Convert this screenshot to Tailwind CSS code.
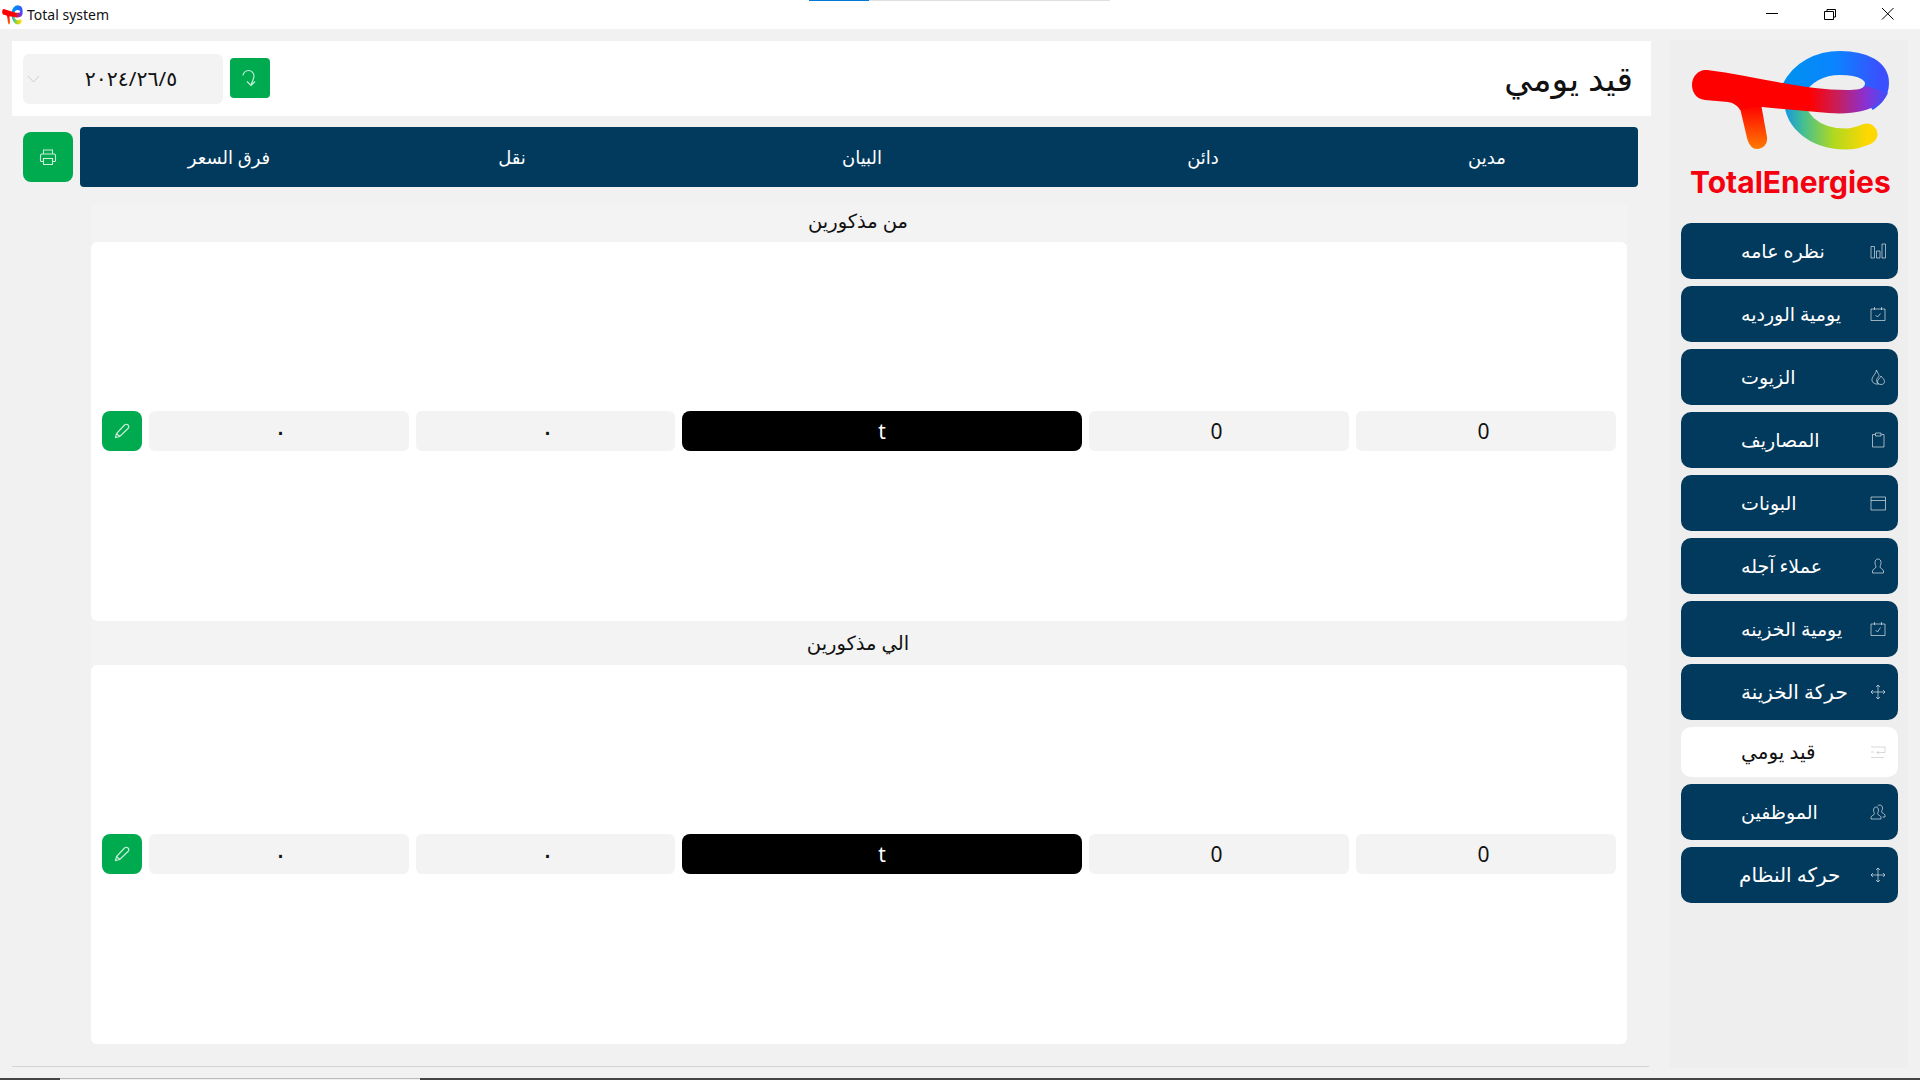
<!DOCTYPE html>
<html lang="ar">
<head>
<meta charset="UTF-8" />
<title>Total system</title>
<script src="https://cdn.jsdelivr.net/npm/@tailwindcss/browser@4"></script>
</head>
<body class="bg-[#f1f1f1] text-[#111] [font-family:'Noto_Sans','DejaVu_Sans',sans-serif] overflow-hidden">

<svg width="0" height="0" class="absolute">
  <defs>
    <linearGradient id="eLow" gradientUnits="userSpaceOnUse" x1="92" y1="0" x2="178" y2="0">
      <stop offset="0" stop-color="#0a8ff0" />
      <stop offset="0.25" stop-color="#45c090" />
      <stop offset="0.6" stop-color="#b0d820" />
      <stop offset="1" stop-color="#ffd800" />
    </linearGradient>
    <linearGradient id="eTop" gradientUnits="userSpaceOnUse" x1="100" y1="0" x2="190" y2="0">
      <stop offset="0" stop-color="#0090f0" />
      <stop offset="0.5" stop-color="#0a84ff" />
      <stop offset="1" stop-color="#3a50ff" />
    </linearGradient>
    <linearGradient id="band" gradientUnits="userSpaceOnUse" x1="0" y1="0" x2="199" y2="0">
      <stop offset="0.6" stop-color="#ff0000" />
      <stop offset="0.74" stop-color="#c81e5a" />
      <stop offset="0.88" stop-color="#8a30d0" />
      <stop offset="1" stop-color="#3a50ff" />
    </linearGradient>
    <linearGradient id="leg" gradientUnits="userSpaceOnUse" x1="0" y1="55" x2="0" y2="99">
      <stop offset="0" stop-color="#ff0000" />
      <stop offset="1" stop-color="#ff7a00" />
    </linearGradient>
    <symbol id="te" viewBox="0 0 202 102" preserveAspectRatio="none">
      <path d="M105 42C101 70 124 89 156 89C163 89 170 87 177 84" fill="none" stroke="url(#eLow)" stroke-width="21" stroke-linecap="round" />
      <path d="M103 40C112 22 130 13 150 13C175 13 187 22 187 33C187 42 182 46 176 50" fill="none" stroke="url(#eTop)" stroke-width="24" />
      <path d="M50 58L57 88C59 96 63 99 67 99C73 99 78 94 77 87L71 54Z" fill="url(#leg)" />
      <path d="M17 20C42 23 68 29 93 33C115 37 135 40 157 40C166 40 173 39 176 36L198 43C194 52 184 58 172 61C160 64 145 64 127 62L72 57C60 56 55 60 50 60C48 56 44 53 38 52L15 50C6 49 2 42 2 35C2 26 9 19 17 20Z" fill="url(#band)" />
    </symbol>
  </defs>
</svg>

<!-- title bar -->
<header class="relative h-[29px] bg-white flex items-center">
  <svg class="ml-[2px] w-[21px] h-[20px]"><use href="#te" /></svg>
  <span class="ml-[4px] text-[14px] leading-none">Total system</span>
  <div class="absolute top-0 left-[809px] flex h-px">
    <div class="w-[60px] bg-[#0078d7]"></div>
    <div class="w-[241px] bg-[#e0e0e0]"></div>
  </div>
  <div class="ml-auto mr-[3px] flex items-center text-black">
    <svg class="w-[58px] h-[29px]" viewBox="0 0 58 29" fill="none" stroke="currentColor"><path d="M23 13.5H35" /></svg>
    <svg class="w-[58px] h-[29px]" viewBox="0 0 58 29" fill="none" stroke="currentColor"><path d="M23.5 11.5H32.5V19.5H23.5ZM26 11V9.5H34.5V17H32.5" /></svg>
    <svg class="w-[58px] h-[29px]" viewBox="0 0 58 29" fill="none" stroke="currentColor"><path d="M23 8L34.5 19.5M34.5 8L23 19.5" /></svg>
  </div>
</header>

<div class="flex h-[1049px]">
  <!-- main column -->
  <main class="w-[1670px] pt-[12px]">
    <section class="ml-[12px] w-[1639px] h-[75px] bg-white flex items-center">
      <div class="ml-[11px] w-[200px] h-[50px] bg-[#f3f3f3] rounded-md flex items-center relative">
        <svg class="absolute left-[4px] w-[13px] h-[8px] text-[#cfcfcf]" viewBox="0 0 13 8" fill="none" stroke="currentColor"><path d="M1 1L6.5 7L12 1" /></svg>
        <span class="w-full text-center pl-[16px] text-[20.5px]" dir="ltr">٢٠٢٤/٢٦/٥</span>
      </div>
      <button class="ml-[7px] mb-px w-10 h-10 bg-[#00ab50] rounded flex items-center justify-center">
        <svg class="w-5 h-5 text-white/80" viewBox="0 0 20 20" fill="none" stroke="currentColor" stroke-width="1.1"><path d="M3 7.5C3 5 5.5 2.5 8.5 2.5C11.5 2.5 14 5 14 8C14 11 12 13 11 17.5M7 13.5L11 17.5L15 13.5" /></svg>
      </button>
      <h1 class="ml-auto mr-[18px] text-[34.5px] leading-none" dir="rtl">قيد يومي</h1>
    </section>

    <div class="mt-[11px] ml-[23px] flex items-center gap-[7px]">
      <button class="w-[50px] h-[50px] bg-[#00ab50] rounded-lg flex items-center justify-center">
        <svg class="w-[18px] h-[18px] text-white/80" viewBox="0 0 18 18" fill="none" stroke="currentColor" stroke-width="1.1"><path d="M4.5 6V2H13.5V6M4.5 13.5H2.5C1.7 13.5 1.5 13 1.5 12.5V7.5C1.5 6.5 2.2 6 3 6H15C15.8 6 16.5 6.5 16.5 7.5V12.5C16.5 13 16.3 13.5 15.5 13.5H13.5M4.5 10.5H13.5V16.5H4.5Z" /></svg>
      </button>
      <div class="w-[1558px] h-[60px] bg-[#023a5d] rounded text-white text-[18px] flex items-center text-center">
        <span class="w-[298px]">فرق السعر</span>
        <span class="w-[268px]">نقل</span>
        <span class="w-[432px]">البيان</span>
        <span class="w-[250px]">دائن</span>
        <span class="w-[310px] pl-2">مدين</span>
      </div>
    </div>

    <div class="mt-[18px] ml-[91px] w-[1536px]">
      <div class="h-[37px] bg-[#f3f3f3] flex items-center justify-center pr-[2px] pb-[6px] text-[19.5px] leading-none">من مذكورين</div>
      <div class="h-[379px] bg-white rounded-md flex items-center pl-[11px] pb-px gap-[7px]">
        <button class="w-10 h-10 bg-[#00ab50] rounded-lg flex items-center justify-center">
          <svg class="w-4 h-4 text-white/80" viewBox="0 0 16 16" fill="none" stroke="currentColor" stroke-width="1.1"><path d="M1.5 14.5L2.5 10.5L10.5 2C11.5 1 13 1 14 2C15 3 15 4.5 14 5.5L5.7 13.5ZM2.5 10.5L5.7 13.5" /></svg>
        </button>
        <div class="w-[260px] h-10 bg-[#f3f3f3] rounded-md flex items-center justify-center pl-[3px] text-[26px] leading-none">٠</div>
        <div class="w-[259px] h-10 bg-[#f3f3f3] rounded-md flex items-center justify-center pl-[4px] text-[26px] leading-none">٠</div>
        <div class="w-[400px] h-10 bg-black rounded-lg flex items-center justify-center text-white text-[21px] leading-none">t</div>
        <div class="w-[260px] h-10 bg-[#f3f3f3] rounded-md flex items-center justify-center pr-[5px] text-[21px] leading-none">0</div>
        <div class="w-[260px] h-10 bg-[#f3f3f3] rounded-md flex items-center justify-center pr-[5px] text-[21px] leading-none">0</div>
      </div>
      <div class="h-[44px] bg-[#f3f3f3] flex items-center justify-center pr-[2px] text-[19.5px] leading-none">الي مذكورين</div>
      <div class="h-[379px] bg-white rounded-md flex items-center pl-[11px] pb-px gap-[7px]">
        <button class="w-10 h-10 bg-[#00ab50] rounded-lg flex items-center justify-center">
          <svg class="w-4 h-4 text-white/80" viewBox="0 0 16 16" fill="none" stroke="currentColor" stroke-width="1.1"><path d="M1.5 14.5L2.5 10.5L10.5 2C11.5 1 13 1 14 2C15 3 15 4.5 14 5.5L5.7 13.5ZM2.5 10.5L5.7 13.5" /></svg>
        </button>
        <div class="w-[260px] h-10 bg-[#f3f3f3] rounded-md flex items-center justify-center pl-[3px] text-[26px] leading-none">٠</div>
        <div class="w-[259px] h-10 bg-[#f3f3f3] rounded-md flex items-center justify-center pl-[4px] text-[26px] leading-none">٠</div>
        <div class="w-[400px] h-10 bg-black rounded-lg flex items-center justify-center text-white text-[21px] leading-none">t</div>
        <div class="w-[260px] h-10 bg-[#f3f3f3] rounded-md flex items-center justify-center pr-[5px] text-[21px] leading-none">0</div>
        <div class="w-[260px] h-10 bg-[#f3f3f3] rounded-md flex items-center justify-center pr-[5px] text-[21px] leading-none">0</div>
      </div>
    </div>

    <div class="mt-[22px] ml-[12px] w-[1637px] h-px bg-[#d4d4d4]"></div>
  </main>

  <!-- sidebar -->
  <aside class="mt-[11px] w-[238px] h-[1028px] bg-[#eeeeee]">
    <div class="h-[183px] pt-[10px] pl-[20px]">
      <svg class="w-[202px] h-[102px]"><use href="#te" /></svg>
      <div class="mt-[10px] text-[30px] leading-[40px] font-bold text-[#f5000f] [font-family:Inter,sans-serif] whitespace-nowrap">TotalEnergies</div>
    </div>
    <nav class="ml-[11px] w-[217px] flex flex-col gap-[7px] text-[19px]">
      <a class="h-14 bg-[#023a5d] text-white rounded-[10px] flex items-center pl-[60px] pr-[12px] justify-between">
        <span>نظره عامه</span>
        <svg class="w-4 h-4 text-white/60" viewBox="0 0 16 16" fill="none" stroke="currentColor"><path d="M1 3.5H4.5V15H1ZM6.5 8H10V15H6.5ZM12 1H15.5V15H12Z" /></svg>
      </a>
      <a class="h-14 bg-[#023a5d] text-white rounded-[10px] flex items-center pl-[60px] pr-[12px] justify-between">
        <span>يومية الورديه</span>
        <svg class="w-4 h-4 text-white/60" viewBox="0 0 16 16" fill="none" stroke="currentColor"><path d="M1 3H15V14.5H1ZM4.5 1V4M11.5 1V4M5.5 9L7.5 11L10.5 7.5" /></svg>
      </a>
      <a class="h-14 bg-[#023a5d] text-white rounded-[10px] flex items-center pl-[60px] pr-[12px] justify-between">
        <span>الزيوت</span>
        <svg class="w-4 h-4 text-white/60" viewBox="0 0 16 16" fill="none" stroke="currentColor"><path d="M6.5 1C7.5 4 9 5 9 6.5C9 7 8.5 8 7.5 9C6 10.5 6.5 14 8.5 15C4 15.5 1.5 13 2 10C2.5 7 6 5 6.5 1ZM11 7C12.5 9 14.5 10.5 14.5 12.5C14.5 14.5 13 15.5 11 15.5C9 15.5 7.5 14.5 7.5 12.5C7.5 10.5 10 9.5 11 7Z" /></svg>
      </a>
      <a class="h-14 bg-[#023a5d] text-white rounded-[10px] flex items-center pl-[60px] pr-[12px] justify-between">
        <span>المصاريف</span>
        <svg class="w-4 h-4 text-white/60" viewBox="0 0 16 16" fill="none" stroke="currentColor"><path d="M5 2.5H2.5V15H14V2.5H11.5M5.5 1H11V4H5.5Z" /></svg>
      </a>
      <a class="h-14 bg-[#023a5d] text-white rounded-[10px] flex items-center pl-[60px] pr-[12px] justify-between">
        <span>البونات</span>
        <svg class="w-4 h-4 text-white/60" viewBox="0 0 16 16" fill="none" stroke="currentColor"><path d="M1 2H15.5V15H1ZM1 5.5H15.5" /></svg>
      </a>
      <a class="h-14 bg-[#023a5d] text-white rounded-[10px] flex items-center pl-[60px] pr-[12px] justify-between">
        <span>عملاء آجله</span>
        <svg class="w-4 h-4 text-white/60" viewBox="0 0 16 16" fill="none" stroke="currentColor"><path d="M8 1C6 1 5 2.5 5 4.5C5 7 6 8 6 9C6 10.5 2.5 11 2.5 13V15H13.5V13C13.5 11 10 10.5 10 9C10 8 11 7 11 4.5C11 2.5 10 1 8 1Z" /></svg>
      </a>
      <a class="h-14 bg-[#023a5d] text-white rounded-[10px] flex items-center pl-[60px] pr-[12px] justify-between">
        <span>يومية الخزينه</span>
        <svg class="w-4 h-4 text-white/60" viewBox="0 0 16 16" fill="none" stroke="currentColor"><path d="M1 3H15V14.5H1ZM4.5 1V4M11.5 1V4M5.5 9L7.5 11L10.5 6.5" /></svg>
      </a>
      <a class="h-14 bg-[#023a5d] text-white rounded-[10px] flex items-center pl-[60px] pr-[12px] justify-between">
        <span class="text-[20px]">حركة الخزينة</span>
        <svg class="w-4 h-4 text-white/60" viewBox="0 0 16 16" fill="none" stroke="currentColor"><path d="M8 1V15M1 8H15M6 3L8 1L10 3M6 13L8 15L10 13M3 6L1 8L3 10M13 6L15 8L13 10" /></svg>
      </a>
      <a class="h-[50px] bg-white text-[#111] rounded-[10px] flex items-center pl-[60px] pr-[12px] justify-between">
        <span class="text-[20px]">قيد يومي</span>
        <svg class="w-4 h-4 text-black/15" viewBox="0 0 16 16" fill="none" stroke="currentColor"><path d="M1 3H15V8.5H7M9 6.5L7 8.5L9 10.5M1 8H4M1 13.5H14" /></svg>
      </a>
      <a class="h-14 bg-[#023a5d] text-white rounded-[10px] flex items-center pl-[60px] pr-[12px] justify-between">
        <span>الموظفين</span>
        <svg class="w-4 h-4 text-white/60" viewBox="0 0 16 16" fill="none" stroke="currentColor"><path d="M6 3C4.5 3 3.5 4.5 3.5 6C3.5 8 4.5 9 4.5 9.8C4.5 11 1 11.5 1 13.5V15H11V13.5C11 11.5 7.5 11 7.5 9.8C7.5 9 8.5 8 8.5 6C8.5 4.5 7.5 3 6 3ZM7.5 2C8 1.3 9 1 10 1C11.5 1 12.5 2.5 12.5 4C12.5 6 11.5 7 11.5 8C11.5 9 15 9.5 15 11.5V13H12.5" /></svg>
      </a>
      <a class="h-14 bg-[#023a5d] text-white rounded-[10px] flex items-center pl-[58px] pr-[12px] justify-between">
        <span class="text-[20px]">حركه النظام</span>
        <svg class="w-4 h-4 text-white/60" viewBox="0 0 16 16" fill="none" stroke="currentColor"><path d="M8 1V15M1 8H15M6 3L8 1L10 3M6 13L8 15L10 13M3 6L1 8L3 10M13 6L15 8L13 10" /></svg>
      </a>
    </nav>
  </aside>
</div>

<!-- bottom edge of the window behind -->
<footer class="flex h-[2px]">
  <div class="w-[60px] bg-[#444]"></div>
  <div class="w-[360px] border-t border-[#bbb]"></div>
  <div class="flex-1 bg-[#444]"></div>
</footer>
</body>
</html>
